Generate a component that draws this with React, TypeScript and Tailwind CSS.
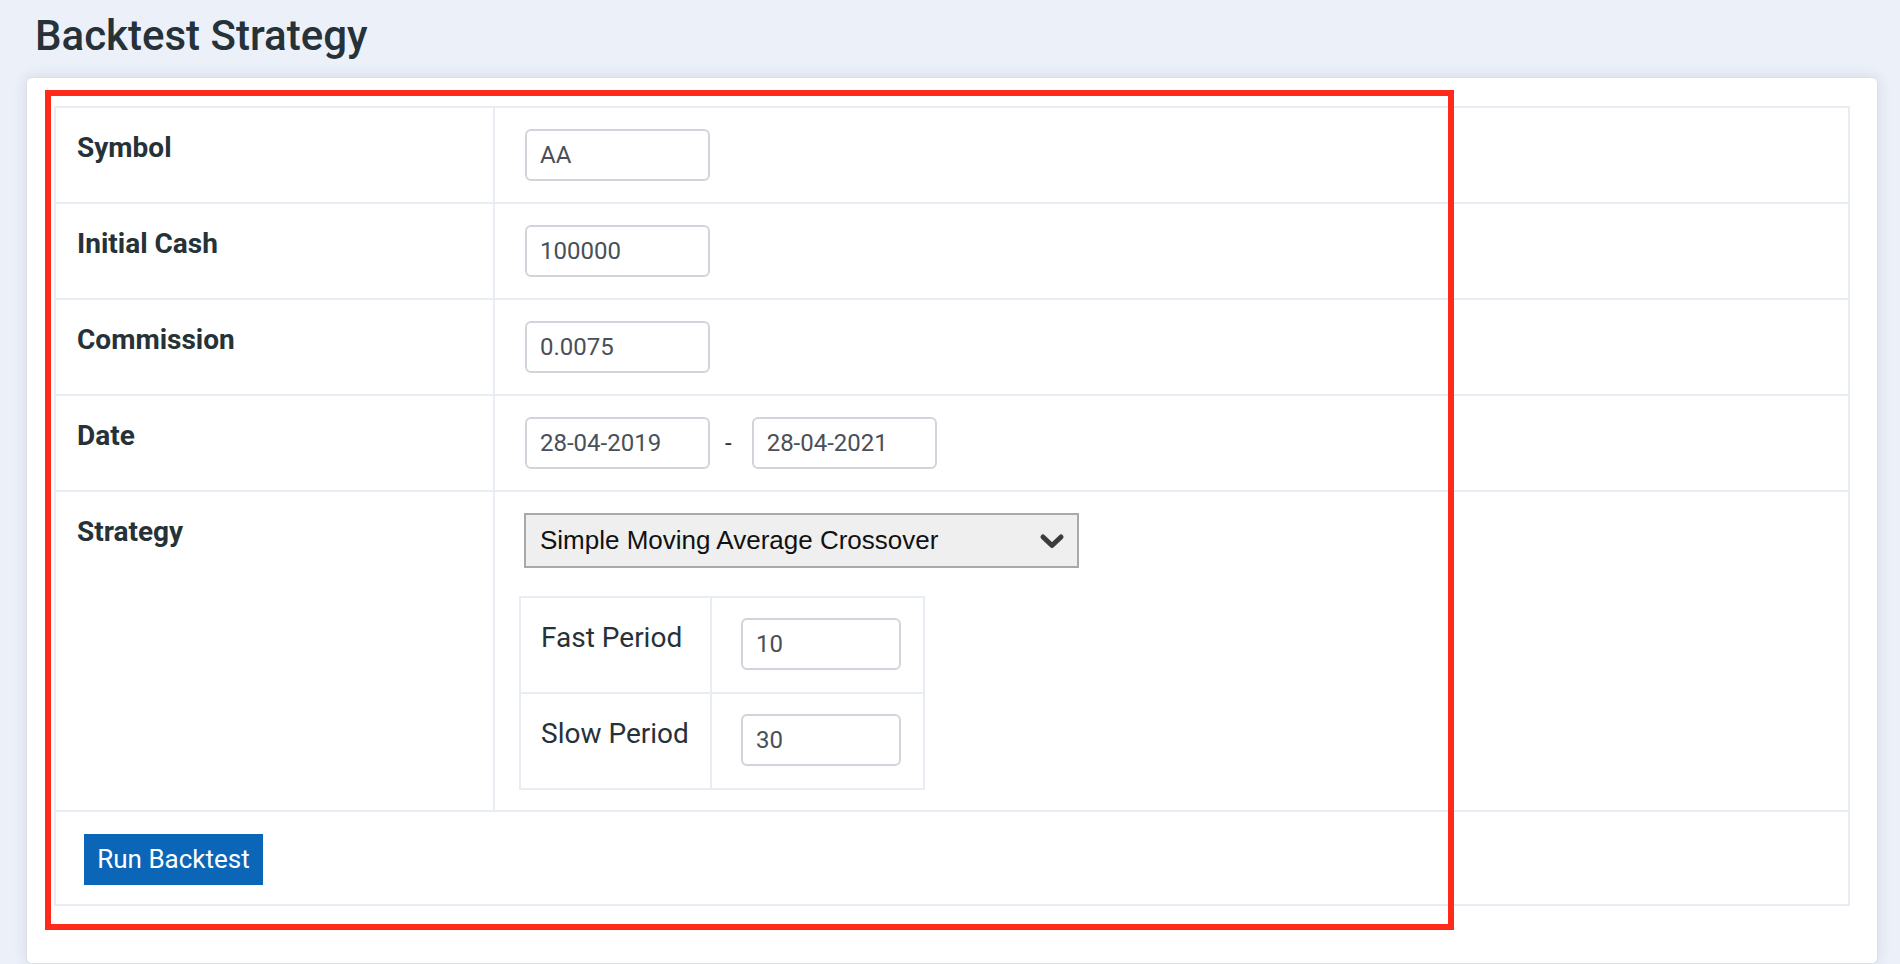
import React from "react";

const line = "border-[#e8edf3]";

function Field({ value, width = "w-[185px]" }: { value: string; width?: string }) {
  return (
    <input
      defaultValue={value}
      className={`ml-[6px] h-[52px] ${width} rounded-[6px] border-2 border-[#d1d5db] bg-white px-[13px] text-[24px] text-[#495057] outline-none`}
    />
  );
}

function Row({ label, children, last }: { label: string; children: React.ReactNode; last?: boolean }) {
  return (
    <div className={`grid grid-cols-[439px_1fr] ${last ? "" : `border-b-2 ${line}`}`}>
      <div className={`border-r-2 ${line} pl-[21px] pt-[21px] text-[28px] font-bold leading-[37px] text-[#263238]`}>
        {label}
      </div>
      <div className="pl-[24px] py-[21px]">{children}</div>
    </div>
  );
}

function ParamRow({ label, value, last }: { label: string; value: string; last?: boolean }) {
  return (
    <div className={`grid grid-cols-[191px_1fr] ${last ? "" : `border-b-2 ${line}`}`}>
      <div className={`border-r-2 ${line} pl-[20px] pt-[21px] text-[28px] leading-[37px] text-[#263238]`}>
        {label}
      </div>
      <div className="pl-[23px] pt-[20px] pb-[22px]">
        <Field value={value} width="w-[160px]" />
      </div>
    </div>
  );
}

export default function App() {
  return (
    <div className="min-h-screen overflow-hidden bg-[#ecf0f8] font-['Roboto',sans-serif]">
      <h1 className="pl-[35px] pt-[12px] text-[42px] font-medium leading-[48px] text-[#263238]">
        Backtest Strategy
      </h1>

      <div className="relative mt-[17px] ml-[26px] mr-[22px] rounded-[6px] border border-[#dde1e6] bg-white px-[27px] pt-[28px] pb-[57px] shadow-[0_0_14px_rgba(40,50,70,0.12)]">
        <div className={`border-2 ${line}`}>
          <Row label="Symbol">
            <Field value="AA" />
          </Row>
          <Row label="Initial Cash">
            <Field value="100000" />
          </Row>
          <Row label="Commission">
            <Field value="0.0075" />
          </Row>
          <Row label="Date">
            <div className="flex items-center">
              <Field value="28-04-2019" />
              <span className="pl-[15px] pr-[20px] text-[24px] text-[#263238]">-</span>
              <input
                defaultValue="28-04-2021"
                className="h-[52px] w-[185px] rounded-[6px] border-2 border-[#d1d5db] bg-white px-[13px] text-[24px] text-[#495057] outline-none"
              />
            </div>
          </Row>

          <div className={`grid grid-cols-[439px_1fr] border-b-2 ${line}`}>
            <div className={`border-r-2 ${line} pl-[21px] pt-[21px] text-[28px] font-bold leading-[37px] text-[#263238]`}>
              Strategy
            </div>
            <div className="pl-[24px] pt-[21px] pb-[20px]">
              <div className="relative ml-[5px] w-[555px]">
                <select
                  defaultValue="sma"
                  className="h-[55px] w-[555px] appearance-none rounded-none border-2 border-[#a9a9a9] bg-[#efefef] pl-[14px] font-['Liberation_Sans',Arial,sans-serif] text-[26px] text-[#111111] outline-none"
                >
                  <option value="sma">Simple Moving Average Crossover</option>
                </select>
                <svg
                  className="pointer-events-none absolute right-[14px] top-[20px]"
                  width="26"
                  height="17"
                  viewBox="0 0 26 17"
                >
                  <path
                    d="M4 4 L13 12.5 L22 4"
                    fill="none"
                    stroke="#3c3c3c"
                    strokeWidth="5"
                    strokeLinecap="round"
                    strokeLinejoin="round"
                  />
                </svg>
              </div>

              <div className={`mt-[28px] w-[406px] border-2 ${line}`}>
                <ParamRow label="Fast Period" value="10" />
                <ParamRow label="Slow Period" value="30" last />
              </div>
            </div>
          </div>

          <div className="pl-[28px] pt-[22px] pb-[19px]">
            <button className="h-[51px] w-[179px] bg-[#0b66b8] text-[26px] text-white">
              Run Backtest
            </button>
          </div>
        </div>

        <div className="pointer-events-none absolute left-[18px] top-[12px] h-[840px] w-[1409px] border-[6px] border-[#ff2a1a]" />
      </div>
    </div>
  );
}
